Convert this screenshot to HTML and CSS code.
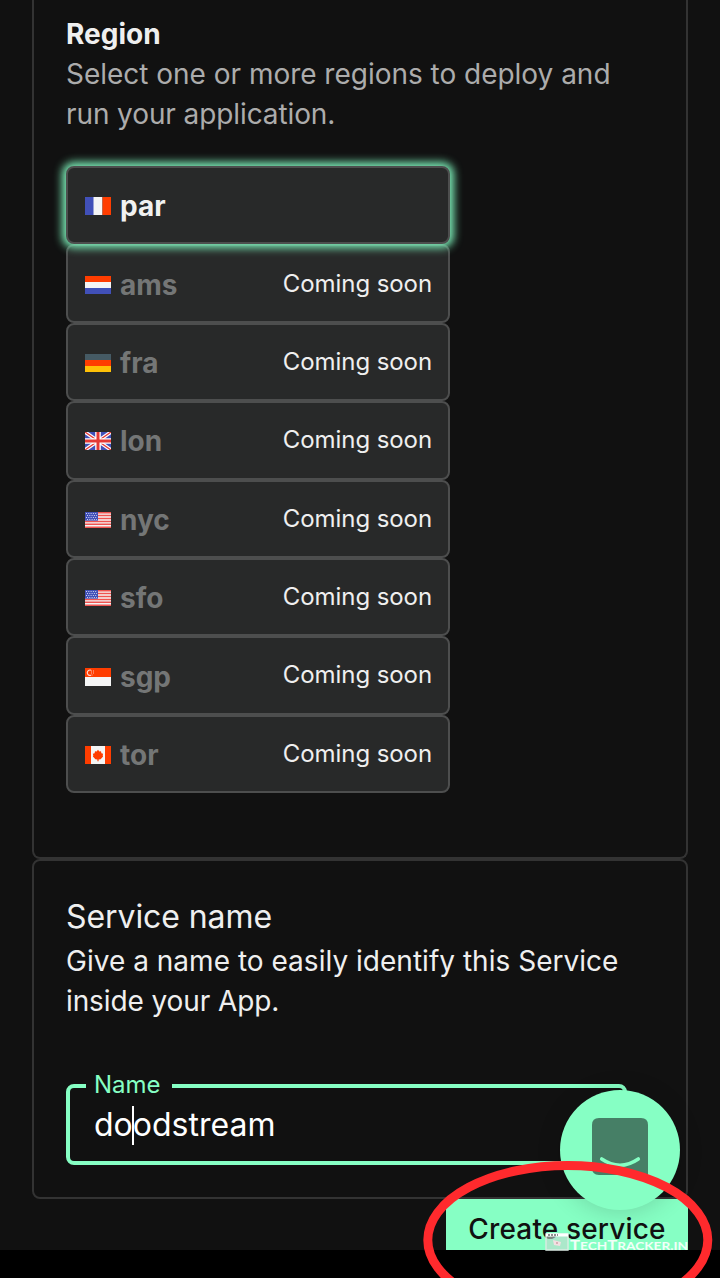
FILE: index.html
```html
<!DOCTYPE html>
<html lang="en">
<head>
<meta charset="utf-8">
<title>Create service</title>
<link rel="stylesheet" href="styles.css">
</head>
<body>
<main class="page">
  <section class="card card-region">
    <h2 class="region-title">Region</h2>
    <p class="region-text">Select one or more regions to deploy and<br><span class="tight">run your application.</span></p>
    <ul class="regions">
      <li class="region selected">
        <svg class="flag" viewBox="0 0 26 18"><path fill="#4150b8" d="M0 0h9v18H0z"/><path fill="#f5f5f5" d="M8.500 0h9v18h-9z"/><path fill="#ff3d00" d="M17.500 0H26v18h-8.500z"/></svg>
        <span class="code">par</span>
      </li>
      <li class="region">
        <svg class="flag" viewBox="0 0 26 18"><path fill="#ff3d00" d="M0 0h26v6H0z"/><path fill="#f5f5f5" d="M0 6h26v6H0z"/><path fill="#4150b8" d="M0 12h26v6H0z"/></svg>
        <span class="code">ams</span><span class="soon">Coming soon</span>
      </li>
      <li class="region">
        <svg class="flag" viewBox="0 0 26 18"><path fill="#455a64" d="M0 0h26v6H0z"/><path fill="#ff3d00" d="M0 6h26v6H0z"/><path fill="#ffc107" d="M0 12h26v6H0z"/></svg>
        <span class="code">fra</span><span class="soon">Coming soon</span>
      </li>
      <li class="region">
        <svg class="flag" viewBox="0 0 26 18"><path fill="#4150b8" d="M0 0h26v18H0z"/><path stroke="#fff" stroke-width="3.600" d="M0 0l26 18M26 0L0 18"/><path stroke="#e53935" stroke-width="1.300" d="M0 0l26 18M26 0L0 18"/><path stroke="#fff" stroke-width="5.600" d="M13 0v18M0 9h26"/><path stroke="#e53935" stroke-width="3" d="M13 0v18M0 9h26"/></svg>
        <span class="code">lon</span><span class="soon">Coming soon</span>
      </li>
      <li class="region">
        <svg class="flag" viewBox="0 0 26 18"><path fill="#f5f5f5" d="M0 1h26v16H0z"/><path stroke="#ef5350" stroke-width="1.500" d="M0 1.700h26M0 4.600h26M0 7.500h26M0 10.400h26M0 13.300h26M0 16.200h26"/><path fill="#4150b8" d="M0 1h13v8.700H0z"/><path stroke="#cfd4ee" stroke-dasharray="1 1.300" d="M1 2.500h11.500M2 4.500h10M1 6.500h11.500M2 8.500h10"/></svg>
        <span class="code">nyc</span><span class="soon">Coming soon</span>
      </li>
      <li class="region">
        <svg class="flag" viewBox="0 0 26 18"><path fill="#f5f5f5" d="M0 1h26v16H0z"/><path stroke="#ef5350" stroke-width="1.500" d="M0 1.700h26M0 4.600h26M0 7.500h26M0 10.400h26M0 13.300h26M0 16.200h26"/><path fill="#4150b8" d="M0 1h13v8.700H0z"/><path stroke="#cfd4ee" stroke-dasharray="1 1.300" d="M1 2.500h11.500M2 4.500h10M1 6.500h11.500M2 8.500h10"/></svg>
        <span class="code">sfo</span><span class="soon">Coming soon</span>
      </li>
      <li class="region">
        <svg class="flag lower" viewBox="0 0 26 18"><path fill="#ff3d00" d="M0 0h26v9H0z"/><path fill="#f5f5f5" d="M0 9h26v9H0z"/><path fill="none" stroke="#ffd5ca" stroke-width="1.200" d="M6 2.200a2.700 2.700 0 1 0 0 5"/><path stroke="#ffc0b0" stroke-dasharray="1 1" d="M6 3h3M6 5h4M6.500 7h2"/></svg>
        <span class="code lower">sgp</span><span class="soon">Coming soon</span>
      </li>
      <li class="region">
        <svg class="flag" viewBox="0 0 26 18"><path fill="#f5f5f5" d="M0 0h26v18H0z"/><path fill="#ff3d00" d="M0 0h6v18H0zM20 0h6v18h-6zM13 3.700l1.400 1.800 1.600-.2.400 2 1.700.4-.4 1.700.4 1.100-2.500 2.700-2 .3v1.700h-1.200v-1.700l-2-.3L7.900 10.500l.4-1.100-.4-1.700 1.700-.4.400-2 1.600.2z"/></svg>
        <span class="code">tor</span><span class="soon">Coming soon</span>
      </li>
    </ul>
  </section>

  <section class="card card-service">
    <h2 class="service-title">Service name</h2>
    <p class="service-text">Give a name to easily identify this Service<br><span class="tight">inside your App.</span></p>
    <fieldset class="field">
      <legend class="field-label">Name</legend>
      <div class="field-value">do<span class="caret"></span>odstream</div>
    </fieldset>
  </section>

  <div class="actions"><button class="create" type="button">Create service</button></div>
</main>

<div class="chat">
  <svg width="56" height="57" viewBox="0 0 56 57"><path fill="#467f66" d="M7 0h42q7 0 7 7v50H7q-7 0-7-7V7q0-7 7-7z"/><path fill="none" stroke="#86ffc4" stroke-width="3.600" stroke-linecap="round" d="M9.700 41q18.300 12.500 36.600 0"/></svg>
</div>

<div class="watermark">
  <svg width="24" height="18" viewBox="0 0 24 18"><path fill="#c5d9cf" fill-opacity=".6" stroke="#dcebe3" stroke-width="1.400" d="M1 1h22v16H1z"/><path stroke="#fff" stroke-width="3" d="M1 2h22"/><path stroke="#222" stroke-width="1.200" stroke-dasharray="2 1" d="M3 2h10"/><path fill="#f3dfe2" d="M8 7l8 2-1 4-6-1z"/><path fill="#d9b0b5" d="M11 9h2v2h-2z"/></svg>
  <svg class="brand" width="119" height="18"><text x="0" y="16.500" textLength="118" lengthAdjust="spacingAndGlyphs">T<tspan class="small">ECH</tspan>T<tspan class="small">RACKER.IN</tspan></text></svg>
</div>

<svg class="marker" width="720" height="1278" viewBox="0 0 720 1278"><ellipse cx="567.800" cy="1240" rx="140" ry="74.500" fill="none" stroke="#ff2a2d" stroke-width="9"/></svg>
</body>
</html>
```
FILE: styles.css
```css
* { box-sizing: border-box; }

body {
  margin: 0;
  height: 1278px;
  overflow: hidden;
  position: relative;
  background: #000;
  color: #efefef;
  font-family: Inter, "Liberation Sans", sans-serif;
}

h2, p, ul { margin: 0; padding: 0; font-weight: 400; }

.page {
  height: 1250px;
  overflow: hidden;
  padding: 0 32px;
  background: #111;
}

.card { border: 2px solid #333; border-radius: 8px; padding: 0 32px; }

.card-region {
  height: 859px;
  padding-top: 14px;
  border-top: 0;
  border-top-left-radius: 0;
  border-top-right-radius: 0;
}

.region-title { font-size: 28px; line-height: 40px; font-weight: 700; white-space: nowrap; }
.region-text { font-size: 28px; line-height: 40px; color: #acacac; letter-spacing: -.02px; white-space: nowrap; }
.tight { letter-spacing: -.1px; }

.regions {
  display: grid;
  grid-template-rows: repeat(8, 1fr);
  width: 384px;
  height: 627px;
  margin-top: 32px;
  list-style: none;
}

.region {
  display: flex;
  align-items: center;
  padding: 0 16px 0 17px;
  border: 2px solid #4d4e4e;
  border-radius: 8px;
  background: #282929;
}

.selected { position: relative; z-index: 1; box-shadow: 0 0 8px 4px #7aeab5; }

.flag { width: 26px; height: 18px; margin-top: 2px; }
.flag.lower { margin-top: 4px; }

.code { margin-left: 9px; font-size: 28px; line-height: 40px; font-weight: 700; color: #747676; padding-top: 2px; }
.code.lower { padding-top: 4px; }
.selected .code { color: #f1f1f1; padding-top: 1px; }

.soon { margin-left: auto; font-size: 24px; line-height: 32px; letter-spacing: -.08px; color: #efefef; }

.card-service { height: 340px; padding-top: 32px; }
.service-title { font-size: 32px; line-height: 48px; letter-spacing: -.08px; }
.service-text { font-size: 28px; line-height: 40px; letter-spacing: .02px; white-space: nowrap; }

.field {
  width: 561px;
  height: 94px;
  margin: 50px 0 0;
  padding: 0 24px;
  border: 4px solid #86ffc4;
  border-radius: 8px;
}

.field-label {
  height: 30px;
  margin-left: -8px;
  padding: 0 11px 2px 8px;
  font-size: 24px;
  line-height: 28px;
  color: #86ffc4;
}

.field-value { display: flex; align-items: center; font-size: 32px; line-height: 48px; color: #fff; }
.caret { width: 2px; height: 39px; margin: 0 -1px; background: #fff; }

.actions { display: flex; justify-content: flex-end; }
.create {
  width: 242px;
  height: 80px;
  padding: 0 0 20px;
  border: 0;
  background: #86ffc4;
  color: #111;
  font: 500 28px/40px Inter, "Liberation Sans", sans-serif;
  letter-spacing: .15px;
  white-space: nowrap;
}

.chat {
  position: absolute;
  left: 560px;
  top: 1090px;
  width: 120px;
  height: 120px;
  padding: 28px 32px;
  border-radius: 50%;
  background: #86ffc4;
  box-shadow: 0 2px 24px rgba(0, 0, 0, .16);
}
.chat svg { display: block; }

.watermark {
  position: absolute;
  left: 545px;
  top: 1233px;
  display: flex;
  align-items: center;
  gap: 1px;
}
.brand { font: 700 13.500px Lato, sans-serif; fill: #f2fff8; overflow: visible; }
.brand .small { font-size: 11px; }

.marker { position: absolute; left: 0; top: 0; }
```
